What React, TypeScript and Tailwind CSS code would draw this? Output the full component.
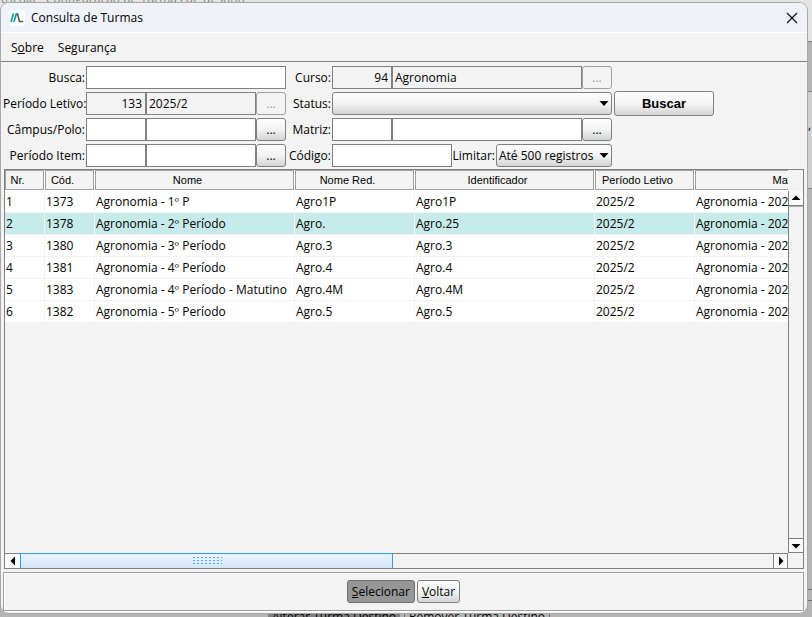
import React, { useState } from 'react';

const columns = [
  { label: 'Nr.', width: 'w-10' },
  { label: 'Cód.', width: 'w-[50px]' },
  { label: 'Nome', width: 'w-[200px]' },
  { label: 'Nome Red.', width: 'w-[120px]' },
  { label: 'Identificador', width: 'w-[180px]' },
  { label: 'Período Letivo', width: 'w-[100px]' },
  { label: 'Matriz', width: 'w-[200px]' },
];

const rows = [
  ['1', '1373', 'Agronomia - 1º P', 'Agro1P', 'Agro1P', '2025/2', 'Agronomia - 2025/2'],
  ['2', '1378', 'Agronomia - 2º Período', 'Agro.', 'Agro.25', '2025/2', 'Agronomia - 2025/2'],
  ['3', '1380', 'Agronomia - 3º Período', 'Agro.3', 'Agro.3', '2025/2', 'Agronomia - 2025/2'],
  ['4', '1381', 'Agronomia - 4º Período', 'Agro.4', 'Agro.4', '2025/2', 'Agronomia - 2025/2'],
  ['5', '1383', 'Agronomia - 4º Período - Matutino', 'Agro.4M', 'Agro.4M', '2025/2', 'Agronomia - 2025/2'],
  ['6', '1382', 'Agronomia - 5º Período', 'Agro.5', 'Agro.5', '2025/2', 'Agronomia - 2025/2'],
];

const Arrow: React.FC<{ points: string }> = ({ points }) => (
  <svg width="10" height="10" viewBox="0 0 10 10" aria-hidden="true">
    <polygon points={points} fill="#000" />
  </svg>
);

const Label: React.FC<{ htmlFor: string; children: React.ReactNode }> = ({ htmlFor, children }) => (
  <label htmlFor={htmlFor} className="pr-px text-right whitespace-nowrap">{children}</label>
);

const field = 'h-[23px] min-w-0 border border-[#808080] bg-white px-0.5 outline-none disabled:bg-[#f3f3f3] disabled:text-black';
const raised = 'rounded-[3px] border border-[#808080] bg-linear-to-b from-[#fdfdfd] via-[#f3f3f3] to-[#d4d4d4]';

// Code + description + "..." button
const Lookup: React.FC<{ id: string; name: string; code?: string; text?: string; disabled?: boolean }> = ({ id, name, code, text, disabled }) => (
  <div className="flex">
    <input id={id} defaultValue={code} disabled={disabled} className={`${field} w-[60px] pr-[3px] text-right`} />
    <input aria-label={`${name} descrição`} defaultValue={text} disabled={disabled} className={`${field} flex-1`} />
    <button
      aria-label={`Procurar ${name}`}
      disabled={disabled}
      className={`h-[23px] w-[30px] ${disabled ? 'rounded-[3px] border border-[#a0a0a0] text-[#999]' : raised}`}
    >
      ...
    </button>
  </div>
);

const Select: React.FC<{ id: string; options: string[] }> = ({ id, options }) => (
  <div className="relative min-w-0 flex-1">
    <select id={id} className={`block h-[23px] w-full appearance-none pl-0.5 outline-none ${raised}`}>
      {options.map(o => <option key={o}>{o}</option>)}
    </select>
    <span className="pointer-events-none absolute top-1.5 right-[3px]">
      <Arrow points="0.5,3 9.5,3 5,8" />
    </span>
  </div>
);

const App: React.FC = () => {
  const [selected, setSelected] = useState('2');

  return (
    <div className="relative isolate flex h-screen flex-col overflow-hidden bg-[#b4b4b4] pt-[3px] pr-[5px] pb-1 pl-px font-['Open_Sans','Noto_Sans',sans-serif] text-[12px] leading-4 text-black">
      {/* Window behind the dialog */}
      <div className="absolute inset-0 -z-10 overflow-hidden" aria-hidden="true">
        <div className="h-[42px] border-b border-[#808080] bg-[#e4e4e4]" />
        <span className="absolute -top-[9px] -left-1.5 whitespace-nowrap text-[#888]">atrícula - Configuração de Turmas de destino</span>
        <div className="absolute top-[91px] right-0 h-[98px] w-1.5 border-y border-[#808080] bg-[#cfcfcf]" />
        <span className="absolute top-[117px] right-0 w-1 overflow-hidden">,</span>
        <div className="absolute right-0 bottom-4 h-3 w-1.5 border-y border-[#707070]" />
        <div className="absolute -bottom-2 left-[268px] flex gap-1">
          <span className="bg-[#808080] px-1">Alterar Turma Destino</span>
          <span className="border-x border-[#707070] px-1">Remover Turma Destino</span>
        </div>
      </div>

      <div className="flex min-h-0 flex-1 flex-col overflow-hidden rounded-lg bg-[#f3f3f3] shadow-[0_0_0_1px_#a8a8a8]">
        <header className="flex h-[30px] shrink-0 items-center border-b border-white bg-[#eff3f9] pr-[9px] pl-2">
          <svg width="16" height="16" viewBox="0 0 16 16" aria-hidden="true">
            <rect width="16" height="16" rx="2" fill="#fff" />
            <path d="M2 12 L4.6 3.2 M4.9 12 L7.5 3.2" stroke="#12a08c" strokeWidth="1.7" fill="none" />
            <path d="M8.4 3.2 L10.4 11.4 H14" stroke="#4a5a60" strokeWidth="1.5" fill="none" />
          </svg>
          <h1 className="ml-1.5 flex-1">Consulta de Turmas</h1>
          <button aria-label="Fechar">
            <svg width="12" height="12" viewBox="0 0 12 12"><path d="M1 1 L11 11 M11 1 L1 11" stroke="#111" strokeWidth="1.2" /></svg>
          </button>
        </header>

        <nav className="flex h-[29px] shrink-0 items-center gap-3.5 border-b border-[#808080] pt-0.5 pl-2.5">
          <button>S<u>o</u>bre</button>
          <button>Segurança</button>
        </nav>

        <form className="grid shrink-0 grid-cols-[83px_200px_46px_280px_100px] items-center gap-y-[3px] pt-1 pb-0.5 pl-0.5" onSubmit={e => e.preventDefault()}>
          <Label htmlFor="busca">Busca:</Label>
          <input id="busca" className={field} />
          <Label htmlFor="curso">Curso:</Label>
          <Lookup id="curso" name="Curso" code="94" text="Agronomia" disabled />
          <span />

          <Label htmlFor="periodo">Período Letivo:</Label>
          <Lookup id="periodo" name="Período Letivo" code="133" text="2025/2" disabled />
          <Label htmlFor="status">Status:</Label>
          <div className="flex"><Select id="status" options={['']} /></div>
          <button className={`-my-px ml-0.5 h-[25px] w-[100px] font-['Liberation_Sans',sans-serif] text-[13px] font-bold ${raised}`}>Buscar</button>

          <Label htmlFor="campus">Câmpus/Polo:</Label>
          <Lookup id="campus" name="Câmpus/Polo" />
          <Label htmlFor="matriz">Matriz:</Label>
          <Lookup id="matriz" name="Matriz" />
          <span />

          <Label htmlFor="item">Período Item:</Label>
          <Lookup id="item" name="Período Item" />
          <Label htmlFor="codigo">Código:</Label>
          <div className="flex items-center">
            <input id="codigo" className={`${field} w-[120px]`} />
            <label htmlFor="limitar" className="w-11 pr-px text-right whitespace-nowrap">Limitar:</label>
            <Select id="limitar" options={['Até 500 registros', 'Até 1000 registros']} />
          </div>
        </form>

        <main className="mx-[3px] flex min-h-0 flex-1 flex-col border border-[#808080]">
          <div className="flex min-h-0 flex-1">
            <div className="min-w-0 flex-1 overflow-hidden">
              <table className="w-[890px] table-fixed border-separate border-spacing-0">
                <thead>
                  <tr>
                    {columns.map(c => (
                      <th key={c.label} className={`h-[21px] border-r border-b border-white p-0 pr-3.5 text-center font-['Liberation_Sans',sans-serif] text-[11px] font-normal shadow-[inset_0_0_0_1px_#a0a0a0] ${c.width}`}>
                        {c.label}
                      </th>
                    ))}
                  </tr>
                </thead>
                <tbody>
                  {rows.map(r => (
                    <tr key={r[0]} onClick={() => setSelected(r[0])} className={r[0] === selected ? 'bg-[#c7eaea]' : 'bg-white'}>
                      {r.map((v, i) => (
                        <td key={i} className="h-[22px] border-r border-b border-[#f3f3f3] p-0 pl-px whitespace-nowrap">{v}</td>
                      ))}
                    </tr>
                  ))}
                </tbody>
              </table>
            </div>
            <div className="mt-[21px] flex w-[15px] shrink-0 flex-col border-l border-[#808080]">
              <button aria-label="Rolar para cima" className="flex h-[15px] items-center justify-center border-b border-[#808080] bg-[#fafafa]"><Arrow points="0.5,7 9.5,7 5,2.5" /></button>
              <div className="flex-1 border-t border-[#b0b0b0]" />
              <button aria-label="Rolar para baixo" className="flex h-[15px] items-center justify-center border-y border-[#808080] bg-[#fafafa]"><Arrow points="0.5,3 9.5,3 5,7.5" /></button>
            </div>
          </div>
          <div className="flex h-[15px] shrink-0 pr-[15px]">
            <button aria-label="Rolar para a esquerda" className="flex w-[15px] items-center justify-center border-t border-[#808080] bg-[#fafafa]"><Arrow points="7,0.5 7,9.5 2.5,5" /></button>
            <div className="flex flex-1 border-t border-[#808080]">
              <div className="-mt-px flex w-[49.6%] items-center justify-center border border-b-0 border-[#3399ff] bg-linear-to-b from-[#e9f4ff] to-[#d3e6f8]">
                <div className="h-2.5 w-[30px] bg-[radial-gradient(#5aa2ea_0.7px,transparent_1px)] bg-size-[4px_3px]" />
              </div>
            </div>
            <button aria-label="Rolar para a direita" className="flex w-[15px] items-center justify-center border-x border-t border-[#808080] bg-[#fafafa]"><Arrow points="3,0.5 3,9.5 7.5,5" /></button>
          </div>
        </main>

        <footer className="mt-[3px] mr-[3px] mb-0.5 ml-0.5 flex h-[39px] shrink-0 items-center justify-center gap-0.5 border border-[#a0a0a0] shadow-[inset_1px_1px_0_#fff,0_1px_0_#fff]">
          <button className="h-[23px] rounded-[3px] border border-[#707070] bg-[#969696] px-1"><u>S</u>elecionar</button>
          <button className={`h-[23px] px-1 ${raised}`}><u>V</u>oltar</button>
        </footer>
      </div>
    </div>
  );
};

export default App;
